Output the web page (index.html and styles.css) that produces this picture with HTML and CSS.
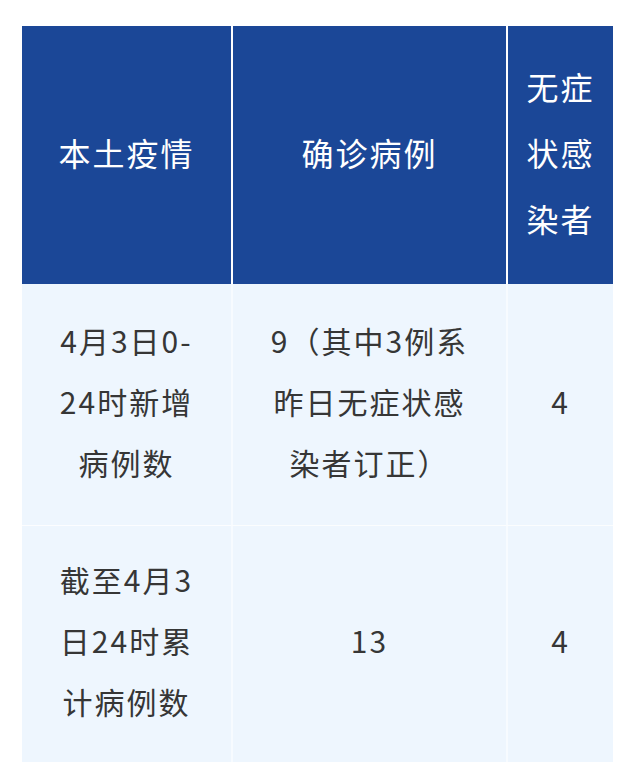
FILE: index.html
```html
<!DOCTYPE html>
<html lang="zh-CN">
<head>
<meta charset="utf-8">
<title>本土疫情</title>
<link rel="stylesheet" href="styles.css">
</head>
<body>
<div class="table">
  <div class="cell head">本土疫情</div>
  <div class="cell head divided">确诊病例</div>
  <div class="cell head divided">无症<br>状感<br>染者</div>

  <div class="cell body">4月3日0-<br>24时新增<br>病例数</div>
  <div class="cell body divided">9（其中3例系<br>昨日无症状感<br>染者订正）</div>
  <div class="cell body divided">4</div>

  <div class="cell body second">截至4月3<br>日24时累<br>计病例数</div>
  <div class="cell body second divided">13</div>
  <div class="cell body second divided">4</div>
</div>
</body>
</html>
```

FILE: styles.css
```css
html, body {
  margin: 0;
  padding: 0;
  background: #ffffff;
}

body {
  font-family: "Noto Sans CJK SC", "Noto Sans", sans-serif;
}

.table {
  margin: 26px 0 0 22px;
  width: 591px;
  display: grid;
  grid-template-columns: 209px 275px 107px;
  grid-template-rows: 258px 241px 237px;
}

.cell {
  display: flex;
  align-items: center;
  justify-content: center;
  text-align: center;
  box-sizing: border-box;
  padding-bottom: 7px;
}

.head {
  background: #1b4797;
  color: #ffffff;
  font-size: 32px;
  letter-spacing: 2px;
  line-height: 66px;
}

.head.divided {
  border-left: 2px solid #ffffff;
}

.body {
  background: #eef6fe;
  color: #363636;
  font-size: 30px;
  letter-spacing: 2px;
  line-height: 61px;
}

.body.divided {
  border-left: 2px solid rgba(255, 255, 255, 0.55);
}

.second {
  border-top: 1px solid rgba(255, 255, 255, 0.8);
}
```
